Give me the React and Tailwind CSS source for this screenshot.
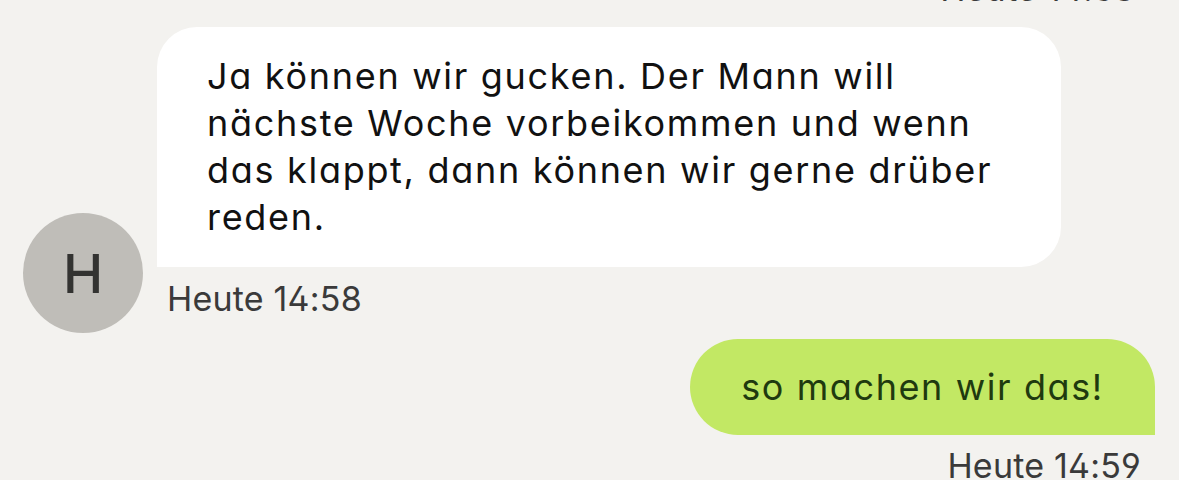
import React from 'react';

const font = { fontFamily: 'Inter, "Open Sans", sans-serif' };

export default function App() {
  return (
    <div
      className="w-[1179px] h-[480px] overflow-hidden bg-[#f3f2ef] flex flex-col [font-feature-settings:'cv11','ss01']"
      style={font}
    >
      {/* previous timestamp, cut off at the top */}
      <div className="shrink-0 self-end mr-[44px] -mt-[28px] h-[34px] text-[34px] leading-[34px] text-[#3a3a3a] tracking-[0.2px]">
        Heute 14:58
      </div>

      {/* received message */}
      <div className="shrink-0 flex items-start mt-[21px]">
        <div className="shrink-0 ml-[23px] mt-[186px] w-[120px] h-[120px] rounded-full bg-[#bfbdb8] flex items-center justify-center text-[54px] font-medium text-[#333331]">
          H
        </div>
        <div className="ml-[14px] flex flex-col">
          <div className="shrink-0 w-[904px] h-[240px] bg-white rounded-[40px] rounded-bl-none pl-[50px] pt-[26px] text-[36px] leading-[47px] text-[#111] tracking-[1.7px]">
            Ja können wir gucken. Der Mann will
            <br />
            nächste Woche vorbeikommen und wenn
            <br />
            das klappt, dann können wir gerne drüber
            <br />
            reden.
          </div>
          <div className="shrink-0 ml-[10px] mt-[15px] h-[34px] text-[34px] leading-[34px] text-[#3a3a3a] tracking-[0.2px]">
            Heute 14:58
          </div>
        </div>
      </div>

      {/* sent message */}
      <div className="shrink-0 self-end mr-[24px] mt-[6px] w-[465px] h-[96px] bg-[#c2e864] rounded-[48px] rounded-br-none flex items-center justify-center text-[36px] text-[#1f3a0f] tracking-[1.6px]">
        so machen wir das!
      </div>
      <div className="shrink-0 self-end mr-[38px] mt-[14px] h-[34px] text-[34px] leading-[34px] text-[#3a3a3a] tracking-[0.2px]">
        Heute 14:59
      </div>
    </div>
  );
}
